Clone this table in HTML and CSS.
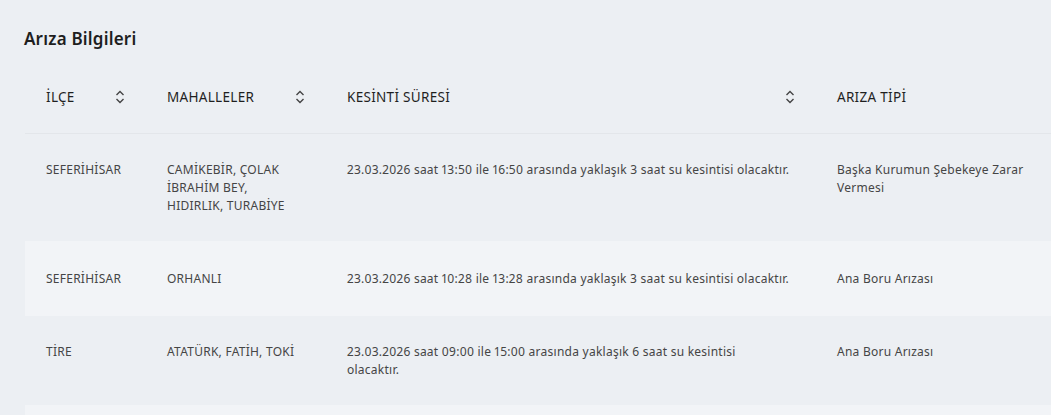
FILE: index.html
```html
<!DOCTYPE html>
<html lang="tr">
<head>
<meta charset="utf-8">
<link rel="stylesheet" href="styles.css">
</head>
<body>
<div class="page">
  <h2 class="title">Arıza Bilgileri</h2>
  <table class="faults">
    <colgroup>
      <col class="c1"><col class="c2"><col class="c3"><col class="c4">
    </colgroup>
    <thead>
      <tr>
        <th><div class="th"><span>İLÇE</span><svg class="sort" viewBox="0 0 10 14"><path d="M1.5 5 L5 1.5 L8.5 5 M1.5 9 L5 12.5 L8.5 9"/></svg></div></th>
        <th><div class="th"><span>MAHALLELER</span><svg class="sort" viewBox="0 0 10 14"><path d="M1.5 5 L5 1.5 L8.5 5 M1.5 9 L5 12.5 L8.5 9"/></svg></div></th>
        <th><div class="th"><span>KESİNTİ SÜRESİ</span><svg class="sort" viewBox="0 0 10 14"><path d="M1.5 5 L5 1.5 L8.5 5 M1.5 9 L5 12.5 L8.5 9"/></svg></div></th>
        <th><div class="th"><span>ARIZA TİPİ</span></div></th>
      </tr>
    </thead>
    <tbody>
      <tr>
        <td>SEFERİHİSAR</td>
        <td><div class="narrow">CAMİKEBİR, ÇOLAK İBRAHİM BEY, HIDIRLIK, TURABİYE</div></td>
        <td><div class="desc">23.03.2026 saat 13:50 ile 16:50 arasında yaklaşık 3 saat su kesintisi olacaktır.</div></td>
        <td>Başka Kurumun Şebekeye Zarar Vermesi</td>
      </tr>
      <tr class="alt single">
        <td>SEFERİHİSAR</td>
        <td><div class="narrow">ORHANLI</div></td>
        <td><div class="desc">23.03.2026 saat 10:28 ile 13:28 arasında yaklaşık 3 saat su kesintisi olacaktır.</div></td>
        <td>Ana Boru Arızası</td>
      </tr>
      <tr>
        <td>TİRE</td>
        <td><div class="narrow">ATATÜRK, FATİH, TOKİ</div></td>
        <td><div class="desc">23.03.2026 saat 09:00 ile 15:00 arasında yaklaşık 6 saat su kesintisi olacaktır.</div></td>
        <td>Ana Boru Arızası</td>
      </tr>
      <tr class="alt">
        <td>&nbsp;</td><td></td><td></td><td></td>
      </tr>
    </tbody>
  </table>
</div>
</body>
</html>
```
FILE: styles.css
```css
html, body {
  margin: 0;
  padding: 0;
  background: #eceff3;
  overflow: hidden;
}
body {
  font-family: "Noto Sans", "Lato", sans-serif;
  color: #333;
}
.page {
  padding: 27px 0 0 25px;
  width: 1060px;
}
.title {
  margin: 0 0 0 -1px;
  font-size: 17px;
  font-weight: 600;
  line-height: 24px;
  letter-spacing: 0.2px;
  color: #1e1e1e;
}
.faults {
  border-collapse: collapse;
  table-layout: fixed;
  width: 1055px;
  margin-top: 9px;
}
.c1 { width: 121px; }
.c2 { width: 180px; }
.c3 { width: 490px; }
.c4 { width: 264px; }
th {
  text-align: left;
  font-weight: 400;
  font-size: 13.5px;
  letter-spacing: 0.3px;
  color: #1f1f1f;
  height: 73px;
  padding: 0 21px;
  border-bottom: 1px solid #e3e6ea;
  vertical-align: middle;
}
.th {
  display: flex;
  align-items: center;
  justify-content: space-between;
}
.sort {
  width: 10px;
  height: 14px;
  fill: none;
  stroke: #444;
  stroke-width: 1.4;
}
td {
  font-size: 12px;
  line-height: 18px;
  letter-spacing: 0.25px;
  color: #454545;
  padding: 27px 21px 26px;
  vertical-align: top;
  font-variant-numeric: proportional-nums;
}
.narrow {
  max-width: 134px;
}
.desc {
  max-width: 443px;
}
tr.single {
  height: 75px;
}
tr.single td {
  padding-top: 29px;
}
tr.alt td {
  background: #f2f4f7;
}
```
